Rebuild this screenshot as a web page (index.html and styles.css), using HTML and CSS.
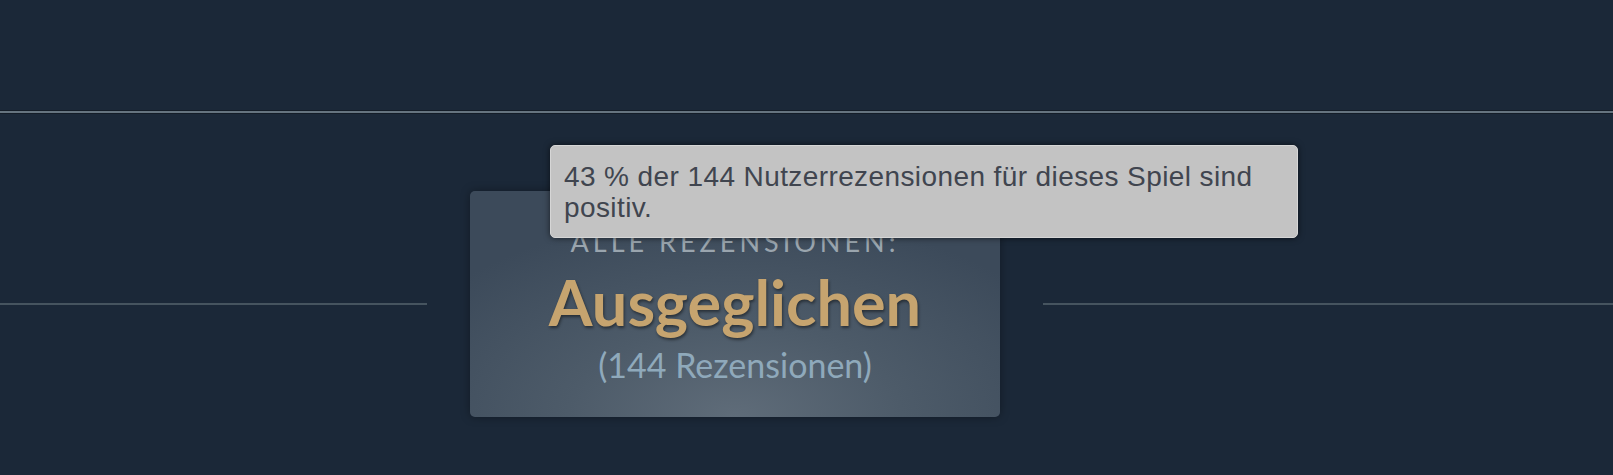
FILE: index.html
```html
<!DOCTYPE html>
<html lang="de">
<head>
  <meta charset="UTF-8">
  <meta name="viewport" content="width=device-width, initial-scale=1.0">
  <title>Nutzerrezensionen</title>
  <link rel="stylesheet" href="styles.css">
</head>
<body>

  <div class="top-rule"></div>

  <!-- Review summary with divider lines -->
  <section class="review-row">
    <div class="rule"></div>
    <div class="summary">
      <div class="summary-label">Alle Rezensionen:</div>
      <div class="summary-score">Ausgeglichen</div>
      <div class="summary-count">(144 Rezensionen)</div>
    </div>
    <div class="rule"></div>
  </section>

  <!-- Hover tooltip -->
  <div class="tooltip">43 % der 144 Nutzerrezensionen für dieses Spiel sind positiv.</div>

</body>
</html>
```

FILE: styles.css
```css
/* Basic styling */
body {
  margin: 0;
  background-color: #1b2838;
  font-family: Lato, "Noto Sans", sans-serif;
  height: 475px;
  overflow: hidden;
  position: relative;
}

.top-rule {
  margin-top: 110px;
  height: 2px;
  background-color: #66747f;
  border-top: 1px solid #141d28;
  border-bottom: 1px solid #141d28;
}

/* Row: line - box - line */
.review-row {
  margin-top: 77px;
  display: grid;
  grid-template-columns: 427px 530px 1fr;
  column-gap: 43px;
  align-items: center;
}

.rule {
  height: 2px;
  background-color: #46545f;
}

.summary {
  height: 226px;
  box-sizing: border-box;
  padding-top: 36px;
  border-radius: 5px;
  text-align: center;
  background: radial-gradient(ellipse 70% 90% at 50% 100%, #5f6c79 0%, #4d5b69 45%, #3c4a5a 100%);
  box-shadow: 0 0 10px rgba(0, 0, 0, 0.35);
}

.summary-label {
  font-size: 27px;
  line-height: 30px;
  letter-spacing: 4px;
  text-transform: uppercase;
  color: #9aa5ae;
}

.summary-score {
  margin-top: 11px;
  font-size: 63px;
  font-weight: bold;
  line-height: 68px;
  color: #c6a46f;
  text-shadow: 1px 2px 3px rgba(0, 0, 0, 0.45);
}

.summary-count {
  margin-top: 10px;
  font-size: 34px;
  line-height: 38px;
  color: #8fa9bb;
}

/* Tooltip over the box */
.tooltip {
  position: absolute;
  left: 550px;
  top: 145px;
  width: 748px;
  box-sizing: border-box;
  padding: 15px 36px 14px 13px;
  background-color: #c3c3c3;
  border: 1px solid #d6d6d6;
  border-radius: 5px;
  box-shadow: 0 0 6px rgba(0, 0, 0, 0.6);
  font-family: "Liberation Sans", Arial, sans-serif;
  font-size: 28px;
  line-height: 31px;
  letter-spacing: 0.4px;
  color: #40454f;
}
```
